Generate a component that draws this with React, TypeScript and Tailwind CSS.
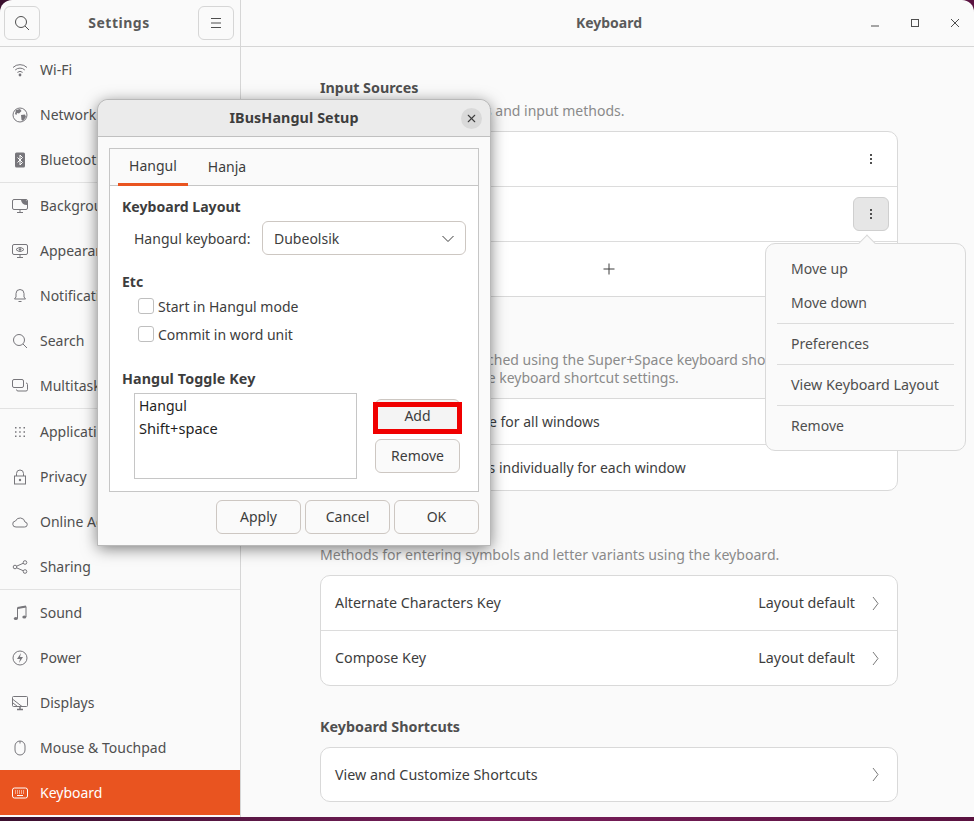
import React from "react";
import { X } from "lucide-react";

const FONT = "font-['Noto_Sans',sans-serif]";

type IconProps = { children: React.ReactNode; className?: string };

const Ic: React.FC<IconProps> = ({ children, className }) => (
	<svg
		viewBox="0 0 16 16"
		fill="none"
		stroke="currentColor"
		strokeWidth={1}
		className={`w-[16px] h-[16px] shrink-0 ${className ?? "text-[#77767b]"}`}
	>
		{children}
	</svg>
);

const SearchIcon = ({ className }: { className?: string }) => (
	<Ic className={className}>
		<circle cx="7" cy="7" r="5.5" />
		<path d="M11 11l4 4" />
	</Ic>
);

type NavItem = { label: string; icon: React.ReactNode; sep?: boolean; active?: boolean };

const nav: NavItem[] = [
	{
		label: "Wi-Fi",
		icon: (
			<Ic>
				<path d="M1 5.5a10 10 0 0 1 14 0M3.2 8a7 7 0 0 1 9.6 0M5.4 10.4a4 4 0 0 1 5.2 0" />
				<circle cx="8" cy="13" r="1.4" fill="currentColor" stroke="none" />
			</Ic>
		),
	},
	{
		label: "Network",
		icon: (
			<Ic>
				<circle cx="8" cy="8" r="7" />
				<path d="M4 3l4-1 1.5 2L7 6.5 5 6l-.5 2L3 7zM9 8l4-.5 1 2.5-3 4-1.5-1z" fill="currentColor" stroke="none" />
			</Ic>
		),
	},
	{
		label: "Bluetooth",
		icon: (
			<Ic>
				<rect x="3" y="0.5" width="10" height="15" rx="1.5" fill="currentColor" stroke="none" />
				<path d="M5.5 5.5l5 5L8 13V3l2.5 2.5-5 5" stroke="#fff" />
			</Ic>
		),
		sep: true,
	},
	{
		label: "Background",
		icon: (
			<Ic>
				<rect x="0.5" y="1.5" width="15" height="10" rx="1.5" />
				<path d="M9 2h4.5a1.5 1.5 0 0 1 1.5 1.5V7a6 6 0 0 1-6-5z" fill="currentColor" stroke="none" />
				<path d="M8 11.5v2.5M5 14.5h6" />
			</Ic>
		),
	},
	{
		label: "Appearance",
		icon: (
			<Ic>
				<rect x="0.5" y="1.5" width="15" height="10" rx="1.5" />
				<path d="M4 6.5q4-4 8 0q-4 4-8 0z" />
				<circle cx="8" cy="6.5" r="1.3" fill="currentColor" stroke="none" />
				<path d="M8 11.5v2.5M5 14.5h6" />
			</Ic>
		),
	},
	{
		label: "Notifications",
		icon: (
			<Ic>
				<path d="M8 1.5a4 4 0 0 0-4 4V9l-1.5 2h11L12 9V5.5a4 4 0 0 0-4-4zM6.5 13.5h3" />
			</Ic>
		),
	},
	{ label: "Search", icon: <SearchIcon /> },
	{
		label: "Multitasking",
		icon: (
			<Ic>
				<rect x="0.5" y="1.5" width="11" height="8" rx="1.5" />
				<path d="M14 5a1.5 1.5 0 0 1 1.5 1.5v5a1.5 1.5 0 0 1-1.5 1.5H6a1.5 1.5 0 0 1-1.5-1.5" />
			</Ic>
		),
		sep: true,
	},
	{
		label: "Applications",
		icon: (
			<Ic>
				<path
					d="M3 3h1.5v1.5H3zM7.2 3h1.5v1.5H7.2zM11.5 3H13v1.5h-1.5zM3 7.2h1.5v1.5H3zM7.2 7.2h1.5v1.5H7.2zM11.5 7.2H13v1.5h-1.5zM3 11.5h1.5V13H3zM7.2 11.5h1.5V13H7.2zM11.5 11.5H13V13h-1.5z"
					fill="currentColor"
					stroke="none"
				/>
			</Ic>
		),
	},
	{
		label: "Privacy",
		icon: (
			<Ic>
				<rect x="2.5" y="7" width="11" height="8" />
				<path d="M4.5 7V4.5a3.5 3.5 0 0 1 7 0V7" />
				<circle cx="8" cy="11" r="1.2" fill="currentColor" stroke="none" />
			</Ic>
		),
	},
	{
		label: "Online Accounts",
		icon: (
			<Ic>
				<path d="M4 13h8.5a2.5 2.5 0 0 0 .5-5 5 5 0 0 0-9.5-1A3 3 0 0 0 4 13z" />
			</Ic>
		),
	},
	{
		label: "Sharing",
		icon: (
			<Ic>
				<circle cx="3" cy="8" r="1.8" />
				<circle cx="13" cy="3.5" r="1.8" />
				<circle cx="13" cy="12.5" r="1.8" />
				<path d="M4.6 7.2l6.8-3M4.6 8.8l6.8 3" />
			</Ic>
		),
		sep: true,
	},
	{
		label: "Sound",
		icon: (
			<Ic>
				<path d="M5.5 13.5V3L14 1.5V12" />
				<path d="M5.5 3L14 1.5" strokeWidth={2} />
				<ellipse cx="3.8" cy="13.5" rx="2" ry="1.6" fill="currentColor" stroke="none" />
				<ellipse cx="12.3" cy="12" rx="2" ry="1.6" fill="currentColor" stroke="none" />
			</Ic>
		),
	},
	{
		label: "Power",
		icon: (
			<Ic>
				<circle cx="8" cy="8" r="7" />
				<path d="M9 3L5 9h3l-1 4 4-6H8z" fill="currentColor" stroke="none" />
			</Ic>
		),
	},
	{
		label: "Displays",
		icon: (
			<Ic>
				<rect x="0.5" y="1.5" width="15" height="10" rx="1" />
				<path d="M1 4.5l9 7M1 8l4.5 3.5" />
				<path d="M5 14.5h6M8 12v2" strokeWidth={1.5} />
			</Ic>
		),
	},
	{
		label: "Mouse & Touchpad",
		icon: (
			<Ic>
				<rect x="3" y="1" width="10" height="14" rx="5" />
				<path d="M8 1v2.5" />
			</Ic>
		),
	},
	{
		label: "Keyboard",
		icon: (
			<Ic className="text-white">
				<rect x="0.5" y="3" width="15" height="10" rx="2" />
				<path d="M3 6h10M3 8h10" strokeDasharray="1 1" />
				<path d="M5 10.5h6" />
			</Ic>
		),
		active: true,
	},
];

const Dots = () => (
	<svg viewBox="0 0 16 16" className="w-[16px] h-[16px] text-[#4f4f4f]" fill="currentColor">
		<rect x="7" y="3" width="2" height="2" />
		<rect x="7" y="7" width="2" height="2" />
		<rect x="7" y="11" width="2" height="2" />
	</svg>
);

const Chevron = () => (
	<svg viewBox="0 0 7 15" className="w-[7px] h-[15px] mr-[4px] text-[#7a7a7a]" fill="none" stroke="currentColor" strokeWidth={1}>
		<path d="M1 1l5 6.5L1 14" />
	</svg>
);

const Row: React.FC<{ children: React.ReactNode; className?: string; border?: boolean }> = ({ children, className, border }) => (
	<div className={`px-[14px] flex items-center justify-between ${className ?? "h-[55px]"} ${border ? "border-b border-[#dcdcdc]" : ""}`}>
		{children}
	</div>
);

const MenuItem: React.FC<{ label: string }> = ({ label }) => (
	<div className="h-[34px] px-[14px] pb-[2px] flex items-center text-[14px] text-[#4f4f4f]">{label}</div>
);

const DialogButton: React.FC<{ label: string; className?: string }> = ({ label, className }) => (
	<button className={`h-[34px] pb-[2px] rounded-[6px] border border-[#cdc7c2] text-[14px] text-[#3d3d3d] ${className ?? "bg-[#fafafa]"}`}>
		{label}
	</button>
);

const headingCls = "text-[14.3px] font-bold leading-[20px] text-[#4f4f4f]";
const cardCls = "rounded-[10px] border border-[#d9d9d9] bg-white text-[14.3px]";

export default function App() {
	return (
		<div className={`${FONT} relative w-[974px] h-[821px] overflow-hidden bg-gradient-to-r from-[#3b0f2e] via-[#7a1f5c] to-[#5a1240]`}>
			<div className="h-[817px] flex bg-[#fafafa] rounded-t-[12px] text-[#3d3d3d]">
				<aside className="w-[241px] shrink-0 border-r border-[#d6d6d6] flex flex-col">
					<div className="h-[47px] shrink-0 border-b border-[#d6d6d6] flex items-center justify-between pl-[4px] pr-[6px]">
						<button className="w-[36px] h-[34px] rounded-[6px] border border-[#d6d6d6] flex items-center justify-center">
							<SearchIcon className="text-[#4f4f4f]" />
						</button>
						<span className="pb-[2px] text-[14px] font-bold tracking-[0.5px] text-[#5a5a5a]">Settings</span>
						<button className="w-[36px] h-[34px] rounded-[6px] border border-[#d6d6d6] flex items-center justify-center">
							<Ic className="text-[#4f4f4f]">
								<path d="M3 3.5h10M3 8h10M3 12.5h10" />
							</Ic>
						</button>
					</div>
					<nav className="flex flex-col">
						{nav.map((item) => (
							<div
								key={item.label}
								className={`flex items-center gap-[12px] pl-[12px] text-[14px] ${item.active ? "bg-[#e95420] text-white" : "text-[#4f4f4f]"} ${item.sep ? "h-[46px] border-b border-[#e2e2e2]" : "h-[45px]"}`}
							>
								{item.icon}
								<span>{item.label}</span>
							</div>
						))}
					</nav>
				</aside>
				<main className="flex-1 flex flex-col min-w-0">
					<header className="h-[47px] shrink-0 border-b border-[#d6d6d6] flex items-center relative">
						<span className="flex-1 text-center pb-[2px] text-[14px] font-bold text-[#5a5a5a] pl-[3px]">Keyboard</span>
						<div className="absolute right-[11px] top-0 h-[46px] flex items-center gap-[24px] text-[#4f4f4f]">
							<Ic className="text-[#4f4f4f]"><path d="M4 11h8" /></Ic>
							<Ic className="text-[#4f4f4f]"><rect x="4.5" y="4.5" width="7" height="7" /></Ic>
							<Ic className="text-[#4f4f4f]"><path d="M4 4l8 8M12 4l-8 8" /></Ic>
						</div>
					</header>
					<div className="pl-[79px] w-[657px]">
						<h2 className={`mt-[31px] ${headingCls}`}>Input Sources</h2>
						<p className="mt-[3px] text-[14px] leading-[20px] text-[#8a8a8a]">Includes keyboard layouts and input methods.</p>
						<section className={`mt-[10px] ${cardCls}`}>
							<Row border>
								<span className="pl-[2px]">Korean (Hangul)</span>
								<span className="w-[36px] flex justify-center mr-[-6px]"><Dots /></span>
							</Row>
							<Row border>
								<span className="pl-[2px]">English (US)</span>
								<span className="w-[36px] h-[34px] rounded-[6px] border border-[#cfcfcf] bg-[#e6e6e6] flex items-center justify-center mr-[-6px]"><Dots /></span>
							</Row>
							<Row className="h-[54px]">
								<span className="flex-1 flex justify-center">
									<Ic className="text-[#3d3d3d]"><path d="M2.5 8h11M8 2.5v11" /></Ic>
								</span>
							</Row>
						</section>
						<h2 className={`mt-[29px] ${headingCls}`}>Input Source Switching</h2>
						<p className="mt-[5px] text-[14px] leading-[18px] text-[#8a8a8a]">
							Input sources can be switched using the Super+Space keyboard shortcut.
							<br />
							This can be changed in the keyboard shortcut settings.
						</p>
						<section className={`mt-[11px] ${cardCls}`}>
							<div className="h-[46px] px-[14px] flex items-center gap-[9px] border-b border-[#dcdcdc]">
								<span className="w-[16px] h-[16px] rounded-full border border-[#bfbfbf]" />
								<span className="text-[14px]">Use the same source for all windows</span>
							</div>
							<div className="h-[45px] px-[14px] flex items-center gap-[9px]">
								<span className="w-[16px] h-[16px] rounded-full border border-[#bfbfbf]" />
								<span className="text-[14px]">Switch input sources individually for each window</span>
							</div>
						</section>
						<h2 className={`mt-[31px] ${headingCls}`}>Special Character Entry</h2>
						<p className="mt-[3px] text-[14.1px] leading-[20px] text-[#8a8a8a]">Methods for entering symbols and letter variants using the keyboard.</p>
						<section className={`mt-[10px] ${cardCls}`}>
							<Row border className="h-[55px]">
								<span>Alternate Characters Key</span>
								<span className="flex items-center gap-[17px]">Layout default<Chevron /></span>
							</Row>
							<Row className="h-[54px]">
								<span>Compose Key</span>
								<span className="flex items-center gap-[17px]">Layout default<Chevron /></span>
							</Row>
						</section>
						<h2 className={`mt-[31px] ${headingCls}`}>Keyboard Shortcuts</h2>
						<section className={`mt-[10px] ${cardCls}`}>
							<Row className="h-[53px]">
								<span>View and Customize Shortcuts</span>
								<Chevron />
							</Row>
						</section>
					</div>
				</main>
			</div>

			{/* row menu popover */}
			<div className="absolute left-[765px] top-[243px] w-[201px] h-[208px] rounded-[10px] border border-[#d9d9d9] bg-[#fafafa] py-[8px] px-[11px]">
				<div className="absolute left-[95px] top-[-7px] w-[12px] h-[12px] rotate-45 bg-[#fafafa] border-l border-t border-[#d9d9d9]" />
				<MenuItem label="Move up" />
				<MenuItem label="Move down" />
				<div className="my-[3px] border-t border-[#dcdcdc]" />
				<MenuItem label="Preferences" />
				<div className="my-[3px] border-t border-[#dcdcdc]" />
				<div className="h-[34px] px-[14px] flex items-center text-[14.3px] text-[#4f4f4f]">View Keyboard Layout</div>
				<div className="my-[3px] border-t border-[#dcdcdc]" />
				<MenuItem label="Remove" />
			</div>

			{/* setup dialog */}
			<div className="absolute left-[98px] top-[100px] w-[392px] h-[445px] flex flex-col rounded-t-[10px] bg-[#fafafa] shadow-[0_3px_16px_rgba(0,0,0,0.55)] outline outline-[#b8b8b8]">
				<div className="h-[37px] shrink-0 relative flex items-center justify-center rounded-t-[10px] bg-[#ebebeb] border-b border-[#c0c0c0]">
					<span className="text-[14.3px] font-bold tracking-[0.1px] text-[#3d3d3d]">IBusHangul Setup</span>
					<span className="absolute right-[8px] top-[8px] w-[21px] h-[21px] rounded-full bg-[#d9d9d9] flex items-center justify-center">
						<X className="w-[13px] h-[13px] text-[#3d3d3d]" />
					</span>
				</div>
				<div className="mx-[11px] mt-[11px] h-[344px] border border-[#c6c6c6] bg-white">
					<div className="h-[37px] flex bg-[#fafafa] border-b border-[#c6c6c6] pl-[8px] text-[14px] text-[#3d3d3d]">
						<div className="w-[70px] h-[37px] pb-[2px] flex items-center justify-center border-b-[3px] border-[#e95420]">Hangul</div>
						<div className="w-[70px] pb-[2px] flex items-center justify-center ml-[4px]">Hanja</div>
					</div>
					<div className="px-[12px] text-[14px] text-[#3d3d3d]">
						<h3 className="mt-[11px] font-bold leading-[20px] text-[14.1px]">Keyboard Layout</h3>
						<div className="mt-[4px] flex items-center pl-[12px]">
							<span className="w-[128px]">Hangul keyboard:</span>
							<div className="w-[204px] h-[34px] rounded-[6px] border border-[#cdc7c2] flex items-center justify-between pl-[11px] pr-[9px]">
								<span>Dubeolsik</span>
								<svg viewBox="0 0 16 16" className="w-[16px] h-[16px]" fill="none" stroke="currentColor" strokeWidth={1}>
									<path d="M2.5 6l5.5 5.5L13.5 6" />
								</svg>
							</div>
						</div>
						<h3 className="mt-[17px] font-bold leading-[20px]">Etc</h3>
						<label className="h-[28px] flex items-center gap-[4px] pl-[16px]">
							<span className="w-[16px] h-[16px] rounded-[3px] border border-[#bfbfbf] bg-white" />
							Start in Hangul mode
						</label>
						<label className="h-[28px] flex items-center gap-[4px] pl-[16px]">
							<span className="w-[16px] h-[16px] rounded-[3px] border border-[#bfbfbf] bg-white" />
							Commit in word unit
						</label>
						<h3 className="mt-[21px] font-bold leading-[20px] text-[14.3px] tracking-[0.1px]">Hangul Toggle Key</h3>
						<div className="mt-[4px] flex pl-[12px]">
							<div className="w-[223px] h-[86px] border border-[#c6c6c6] px-[4px] text-[#1f1f1f] leading-[23px]">
								<div>Hangul</div>
								<div className="text-[14.6px]">Shift+space</div>
							</div>
							<div className="ml-[18px] w-[85px] flex flex-col gap-[6px] mt-[6px]">
								<div className="relative h-[34px]">
									<DialogButton label="Add" className="w-full bg-[#f4f4f4]" />
									<div className="absolute left-[-2px] right-[-2px] top-[3px] h-[32px] border-[5px] border-[#f00000]" />
								</div>
								<DialogButton label="Remove" className="w-full bg-[#fafafa]" />
							</div>
						</div>
					</div>
				</div>
				<div className="mx-[11px] mt-[8px] flex justify-end gap-[4px]">
					<DialogButton label="Apply" className="w-[85px] bg-[#fafafa]" />
					<DialogButton label="Cancel" className="w-[85px] bg-[#fafafa]" />
					<DialogButton label="OK" className="w-[85px] bg-[#fafafa]" />
				</div>
			</div>
		</div>
	);
}
